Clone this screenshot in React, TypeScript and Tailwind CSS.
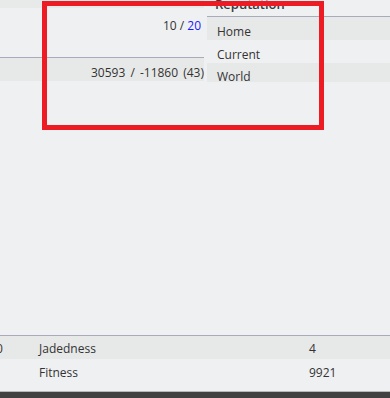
import React from 'react';

const font = { fontFamily: '"Open Sans", "Noto Sans", sans-serif' };

const Row = ({ dark, children, className = '' }: { dark?: boolean; children: React.ReactNode; className?: string }) => (
    <div className={`h-[23px] shrink-0 text-[12px] leading-[16px] ${dark ? 'bg-[#e7e8e8]' : ''} ${className}`}>{children}</div>
);

const App = () => {
    return (
        <div
            className="relative w-[390px] h-[398px] overflow-hidden bg-[#eff0f1] text-[#333333] flex flex-col"
            style={font}
        >
            {/* top: stats + reputation */}
            <div className="flex h-[82px] shrink-0 overflow-hidden">
                <div className="w-[204px]">
                    <div className="h-[8px] bg-[#e8e9e9]" />
                    <div className="h-[49px] pt-[10px] pr-[3px] text-right text-[12px] leading-[16px]">
                        10 / <span className="text-[#1a1aff]">20</span>
                    </div>
                    <div className="h-[1px] bg-[#a9abbc]" />
                    <Row dark className="text-right pt-[7px] [word-spacing:2px]">
                        30593 / -11860 (43)
                    </Row>
                </div>
                <div className="flex-1 ml-[3px]">
                    <div className="h-[16px] relative">
                        <div className="absolute left-[8px] top-[-4px] text-[13px] font-semibold leading-[16px] text-[#3a3a3a]">
                            Reputation
                        </div>
                    </div>
                    <div className="h-[1px] bg-[#a9abbc]" />
                    <Row dark className="pl-[10px] pt-[7px]">Home</Row>
                    <Row className="pl-[10px] pt-[7px]">Current</Row>
                    <Row dark className="pl-[10px] pt-[6px]">World</Row>
                </div>
            </div>

            <div className="flex-1" />

            {/* bottom: jadedness / fitness */}
            <div className="h-[1px] bg-[#a9abbc]" />
            <div className="flex h-[23px] bg-[#e7e8e8] text-[12px] leading-[16px] pt-[5px]">
                <div className="w-[43px] -ml-[4px]">0</div>
                <div className="w-[270px]">Jadedness</div>
                <div>4</div>
            </div>
            <div className="flex h-[23px] text-[12px] leading-[16px] pt-[6px]">
                <div className="w-[39px]" />
                <div className="w-[270px]">Fitness</div>
                <div>9921</div>
            </div>
            <div className="h-[9px]" />
            <div className="h-[1px] bg-[#b8b8b8]" />
            <div className="h-[6px] bg-[#414141]" />

            {/* red annotation box */}
            <div className="absolute left-[42px] top-[1px] w-[282px] h-[129px] border-[5px] border-[#ed1c24]" />
        </div>
    );
};

export default App;
